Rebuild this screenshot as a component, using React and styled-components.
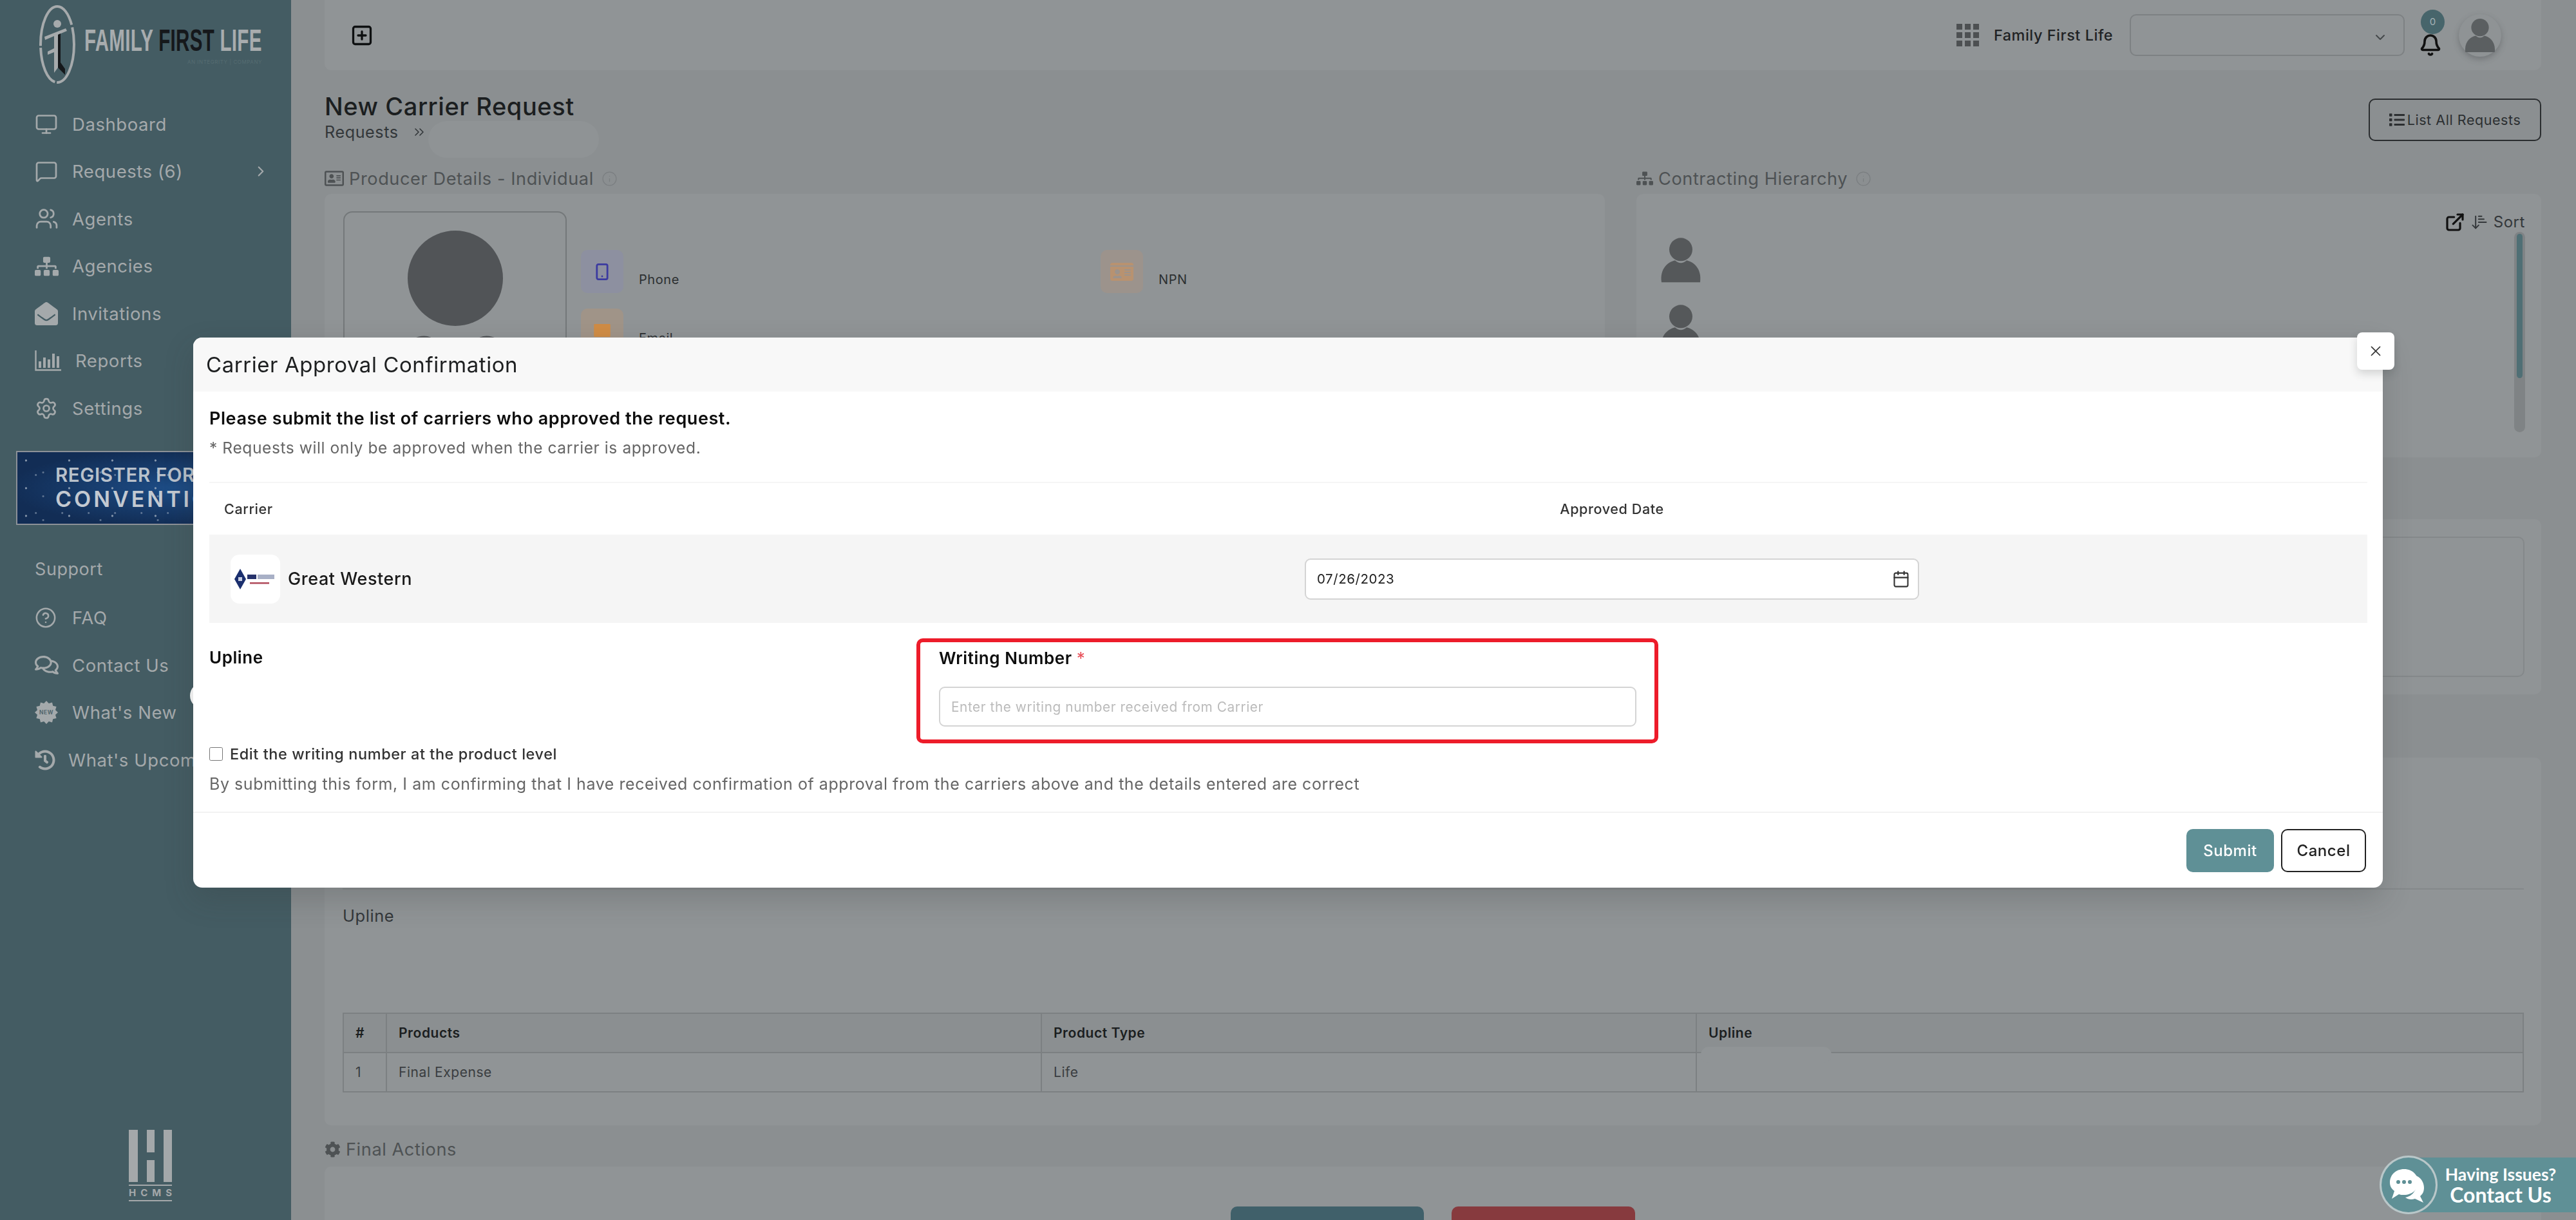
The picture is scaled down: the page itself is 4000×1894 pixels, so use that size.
import React from 'react';
import styled, { createGlobalStyle } from 'styled-components';
import { Monitor, MessageSquare, Users, Settings, CircleHelp, ChevronRight, ChevronDown, ChevronsRight, SquarePlus, Bell, Info, ExternalLink, ArrowDownNarrowWide, Calendar, X, Smartphone, Mail } from 'lucide-react';
import { FaSitemap, FaEnvelopeOpen, FaRegComments, FaHistory, FaList, FaRegAddressCard, FaCog, FaIdCard } from 'react-icons/fa';

const Global = createGlobalStyle`
  html, body { margin: 0; padding: 0; width: 4000px; height: 1894px; overflow: hidden; background: #8b8f91; }
  body { font-family: Inter, "Open Sans", "Liberation Sans", sans-serif; letter-spacing: 0.035em; }
  * { box-sizing: border-box; }
  input { font-family: inherit; letter-spacing: inherit; }
`;

const Page = styled.div`display: flex; width: 4000px; height: 1894px; overflow: hidden;`;

/* ---------- sidebar ---------- */
const Sidebar = styled.aside`
  width: 452px; flex: none; height: 100%; background: #445c63; display: flex; flex-direction: column; color: #a4a9ab;
`;
const Brand = styled.div`height: 156px; padding: 7px 0 0 60px; display: flex; align-items: flex-start;`;
const BrandWords = styled.div`margin: 37px 0 0 13px; display: flex; flex-direction: column; width: 276px;`;
const BrandName = styled.div`
  font-family: "Liberation Sans", sans-serif; font-weight: 700; font-size: 48px; line-height: 38px; letter-spacing: 0.01em; white-space: nowrap;
  color: #a8acae; transform: scaleX(0.615); transform-origin: left center;
`;
const BrandDark = styled.span`color: #15181b;`;
const BrandSub = styled.div`font-size: 8px; line-height: 10px; color: #566c72; text-align: right; margin-top: 9px; white-space: nowrap;`;
const Nav = styled.nav`display: flex; flex-direction: column; padding-left: 54px;`;
const NavItem = styled.div`
  height: 73.5px; display: flex; align-items: center; font-size: 27.5px; white-space: nowrap; position: relative;
`;
const NavIcon = styled.span`width: ${p => p.$w || 58}px; flex: none; display: flex; align-items: center;`;
const NavChevron = styled.span`position: absolute; left: 338px; display: flex;`;
const Banner = styled.div`
  width: 400px; height: 115px; margin: 29px 0 0 25px; border: 2px solid #8c9198; flex: none; padding: 18px 0 0 59px; overflow: hidden;
  background-color: #173a68;
  background-image:
    radial-gradient(circle at 20% 30%, rgba(169,181,196,.75) 0 1.2px, transparent 2px),
    radial-gradient(circle at 70% 60%, rgba(147,163,184,.6) 0 1px, transparent 2px),
    radial-gradient(circle at 45% 85%, rgba(169,181,196,.5) 0 1px, transparent 2px),
    radial-gradient(ellipse at 60% 50%, #1d4c85 0, #122d55 75%);
  background-size: 67px 43px, 41px 59px, 89px 37px, 100% 100%;
`;
const BannerTop = styled.div`font-size: 29.5px; line-height: 35px; font-weight: 600; color: #b9c1cb; white-space: nowrap; letter-spacing: 0.02em;`;
const BannerBig = styled.div`font-size: 34px; line-height: 40px; font-weight: 600; color: #c3c9d1; letter-spacing: 4px; white-space: nowrap;`;
const SupportLabel = styled.div`height: 60px; margin: 39px 0 9px 54px; font-size: 27px; display: flex; align-items: center; flex: none;`;
const HcmsMark = styled.div`margin: auto 0 29px 200px; width: 67px; flex: none; display: flex; flex-direction: column;`;
const HcmsText = styled.div`
  border-top: 2px solid #a4a8aa; border-bottom: 2px solid #a4a8aa; margin-top: 4px; font-size: 15px; line-height: 22px; font-weight: 700; color: #a4a8aa;
  display: flex; justify-content: space-between; letter-spacing: 0;
`;

/* ---------- main ---------- */
const Main = styled.main`flex: 1; min-width: 0; padding: 0 54px 0 52px; color: #2b2e30;`;
const TopBar = styled.header`
  height: 109px; background: #909496; border-radius: 0 0 10px 10px; display: flex; align-items: center; padding: 0 62px 0 40px;
`;
const TopRight = styled.div`margin-left: auto; display: flex; align-items: center;`;
const OrgName = styled.span`font-size: 23.4px; margin-left: 23px; color: #1f2224; white-space: nowrap; font-weight: 500;`;
const OrgSelect = styled.div`
  width: 427px; height: 65px; border: 2px solid #7d8183; border-radius: 10px; margin-left: 26px; display: flex; align-items: center; justify-content: flex-end; padding: 6px 24px 0 0; color: #45494b;
`;
const BellWrap = styled.div`position: relative; width: 36px; height: 66px; margin-left: 22px; display: flex; align-items: flex-end; color: #111;`;
const BellBadge = styled.span`
  position: absolute; left: 3px; top: -7px; width: 37px; height: 38px; border-radius: 50%; background: #47656b; color: #a5b3b6; font-size: 15px;
  display: flex; align-items: center; justify-content: center; letter-spacing: 0;
`;
const Avatar = styled.div`
  width: 66px; height: 66px; border-radius: 50%; margin-left: 26px; background: #8f9395; box-shadow: 0 4px 10px rgba(60,64,66,.35); display: flex; align-items: center; justify-content: center;
`;
const PageHead = styled.div`display: flex; justify-content: space-between; align-items: flex-start; margin-top: 34px; height: 116px;`;
const PageTitle = styled.h1`margin: 0; font-size: 38px; line-height: 44px; font-weight: 500; color: #1b1e20;`;
const Crumbs = styled.div`position: relative; display: flex; align-items: center; gap: 20px; font-size: 25.2px; line-height: 36px; color: #33373a;`;
const Redaction = styled.span`
  position: absolute; left: ${p => p.$l}px; top: ${p => p.$t}px; width: ${p => p.$w}px; height: ${p => p.$h}px; border-radius: 30px; background: ${p => p.$c || '#93979a'};
`;
const OutlineBtn = styled.div`
  width: 268px; height: 66px; margin-top: 10px; border: 2.5px solid #2a2d2f; border-radius: 10px; display: flex; align-items: center; justify-content: center; gap: 4px; font-size: 21.5px; color: #2c2f31; white-space: nowrap;
`;
const TwoCols = styled.div`display: grid; grid-template-columns: 1988px 1405px; column-gap: 49px;`;
const SectionTitle = styled.div`display: flex; align-items: center; gap: 8px; height: 36px; font-size: 27.2px; color: #4e5254; white-space: nowrap;`;
const InfoMark = styled.span`display: flex; margin-left: 4px; color: #7a7e80;`;
const Panel = styled.section`
  background: #909496; border-radius: 10px; margin-top: ${p => p.$mt || 6}px; position: relative;
`;
const ProducerPanel = styled(Panel)`height: 408px; padding: 27px 29px; display: flex; overflow: hidden;`;
const PhotoBox = styled.div`
  width: 347px; height: 360px; border: 2px solid #74787a; border-radius: 14px; flex: none; display: flex; justify-content: center; padding-top: 28px; overflow: hidden;
`;
const Facts = styled.div`margin-left: 22px; padding-top: 60px; display: grid; grid-template-columns: 807px 1fr; grid-auto-rows: 91px;`;
const Fact = styled.div`display: flex; align-items: flex-start; font-size: 20px;`;
const FactTile = styled.span`
  width: 66px; height: 67px; border-radius: 10px; background: ${p => p.$bg}; color: ${p => p.$c}; display: flex; align-items: center; justify-content: center; flex: none;
`;
const FactLabel = styled.span`margin: 33px 0 0 24px; line-height: 26px; color: #2c2f31;`;
const HierarchyPanel = styled(Panel)`height: 409px; padding: 30px 25px 39px 36px; display: flex; justify-content: space-between; overflow: hidden;`;
const PeopleList = styled.div`display: flex; flex-direction: column; gap: 33px; padding-top: 37px;`;
const HierTools = styled.div`display: flex; flex-direction: column; align-items: flex-end; gap: 2px;`;
const ToolRow = styled.div`display: flex; align-items: center; gap: 8px; font-size: 24px; height: 27px; color: #33373a;`;
const ScrollTrack = styled.div`width: 17px; flex: 1; background: #7f8385; border-radius: 9px; padding: 3px 4px;`;
const ScrollThumb = styled.div`width: 9px; height: 224px; background: #4f6f75; border-radius: 5px;`;
const WidePanel = styled(Panel)`height: 272px; padding: 27px 26px; margin-top: 96px;`;
const InnerBox = styled.div`height: 100%; border: 2px solid #84888a; border-radius: 10px;`;
const DetailPanel = styled(Panel)`height: 571px; padding: 203px 27px 0 28px; margin-top: 98px;`;
const Rule = styled.hr`border: 0; border-top: 2px solid #85898b; margin: 0;`;
const PlainLabel = styled.div`font-size: 25.5px; line-height: 34px; margin-top: 24px; color: #33373a;`;
const Table = styled.table`
  width: 100%; margin-top: 133px; border-collapse: collapse; table-layout: fixed; font-size: 21px; position: relative;
`;
const Th = styled.th`
  height: 61px; border: 2px solid #7c8082; text-align: left; padding: 0 18px; font-weight: 600; color: #1b1e20; background: #8b8f91; width: ${p => p.$w ? p.$w + 'px' : 'auto'};
`;
const Td = styled.td`height: 61px; border: 2px solid #7c8082; padding: 0 18px; color: #3a3d40; position: relative;`;
const ActionsTitle = styled(SectionTitle)`margin-top: 19px;`;
const ActionsPanel = styled(Panel)`margin-top: 9px; height: 200px; padding-top: 62px; display: flex; justify-content: center; gap: 43px;`;
const ActionBtn = styled.div`width: ${p => p.$w}px; height: 80px; border-radius: 10px; background: ${p => p.$bg};`;

/* ---------- modal ---------- */
const ModalLayer = styled.div`position: fixed; inset: 0; display: flex; justify-content: center; align-items: flex-start; padding-top: 524px; z-index: 10;`;
const Modal = styled.div`
  position: relative; width: 3400px; height: 854px; background: #fff; border-radius: 14px; box-shadow: 0 18px 45px rgba(50,54,56,.22); color: #111; display: flex; flex-direction: column;
`;
const ModalHead = styled.div`height: 84px; flex: none; background: #f8f8f8; border-radius: 14px 14px 0 0; display: flex; align-items: center; padding-left: 20px; font-size: 33px; font-weight: 400; color: #1d1f20;`;
const CloseBtn = styled.button`
  position: absolute; top: -8px; right: -18px; width: 58px; height: 58px; border: 0; border-radius: 8px; background: #fff; box-shadow: 0 6px 14px rgba(40,44,46,.18); display: flex; align-items: center; justify-content: center; color: #333; padding: 0;
`;
const ModalBody = styled.div`flex: 1; padding: 26px 24px 0 25px;`;
const Lead = styled.div`font-size: 27px; line-height: 32px; font-weight: 600; color: #0d0d0d;`;
const Hint = styled.div`font-size: 24.6px; line-height: 32px; margin-top: 13px; color: #666; padding-bottom: 37px; border-bottom: 2px solid #f5f5f5;`;
const CarrierGrid = styled.div`
  display: grid; grid-template-columns: 1701px 954px 1fr; align-items: center; height: ${p => p.$h}px; background: ${p => p.$bg || 'transparent'};
`;
const HeadCell = styled.div`font-size: 21.6px; font-weight: 500; color: #333; padding-left: ${p => p.$pl || 0}px; text-align: ${p => p.$center ? 'center' : 'left'};`;
const CarrierCell = styled.div`display: flex; align-items: center; gap: 12px; padding-left: 33px; font-size: 27px; font-weight: 500; color: #1a1a1a;`;
const CarrierLogo = styled.div`width: 77px; height: 76px; background: #fff; border-radius: 14px; display: flex; align-items: center; justify-content: center; flex: none;`;
const DateField = styled.div`position: relative; height: 64px; display: flex;`;
const TextInput = styled.input`
  width: 100%; height: 100%; background: #fff; border: 2px solid #d4d4d4; border-radius: 9px; padding: 0 17px; font-size: ${p => p.$fs || 20}px; color: #222; outline: none;
  &::placeholder { color: #bbb; }
`;
const DateIcon = styled.span`position: absolute; right: 14px; top: 18px; display: flex; color: #333;`;
const FormRow = styled.div`display: grid; grid-template-columns: 1098px 1152px; margin-top: 24px;`;
const FieldLabel = styled.div`font-size: 26px; line-height: 32px; font-weight: 600; color: #0d0d0d; padding-top: ${p => p.$pt || 0}px;`;
const Required = styled.span`color: #e8505a; font-weight: 400;`;
const Highlight = styled.div`border: 6px solid #ed1c2a; border-radius: 10px; padding: 9px 28px 20px 29px; height: 163px; display: flex; flex-direction: column; gap: 28px;`;
const InputHold = styled.div`height: 62px;`;
const CheckRow = styled.label`display: flex; align-items: center; gap: 11px; height: 32px; font-size: 23.5px; color: #333; font-weight: 500;`;
const Check = styled.input`width: 21px; height: 21px; margin: 0; flex: none;`;
const Consent = styled.div`font-size: 25px; line-height: 32px; margin-top: 15px; color: #666; white-space: nowrap;`;
const ModalFoot = styled.div`height: 118px; flex: none; border-top: 2px solid #f2f2f2; display: flex; justify-content: flex-end; align-items: flex-start; gap: 11px; padding: 25px 26px 0 0;`;
const FootBtn = styled.button`
  width: ${p => p.$w}px; height: 67px; border-radius: 10px; font-family: inherit; letter-spacing: inherit; font-size: 24px; font-weight: 500; padding: 0;
  background: ${p => p.$solid ? '#5f9096' : '#fff'}; color: ${p => p.$solid ? '#fff' : '#222'}; border: ${p => p.$solid ? '0' : '2.5px solid #222'};
`;
const CollapseDot = styled.span`position: fixed; left: 295px; top: 1060px; width: 40px; height: 40px; border-radius: 50%; background: #fff; z-index: 9;`;
const HelpWidget = styled.div`
  position: fixed; right: 0; bottom: 12px; width: 265px; height: 85px; background: #5f9096; display: flex; flex-direction: column; justify-content: center; color: #fff; z-index: 11;
  font-family: Lato, "Liberation Sans", sans-serif; font-weight: 700; letter-spacing: 0; padding: 0 26px 0 57px; text-align: center;
`;
const HelpCircle = styled.div`
  position: absolute; left: -40px; top: -3px; width: 90px; height: 91px; border-radius: 50%; background: #5f9096; border: 3px solid #b9c7c9; display: flex; align-items: center; justify-content: center;
`;
const HelpSmall = styled.div`font-size: 26.5px; line-height: 30px; white-space: nowrap;`;
const HelpBig = styled.div`font-size: 32px; line-height: 34px; white-space: nowrap;`;

/* ---------- drawings ---------- */
const Emblem = () => (
  <svg width="58" height="124" viewBox="0 0 58 124" fill="none">
    <ellipse cx="29" cy="62" rx="26" ry="59" stroke="#a6aaac" strokeWidth="4" strokeDasharray="70 3 60 3 110 4" />
    <circle cx="29" cy="30" r="6" fill="#a6aaac" />
    <path d="M9 50 L42 37 L44 41 L30 47 L30 98 L24 106 L24 74 L14 78 L14 73 L24 68 L24 49 L10 55 Z" fill="#a6aaac" />
    <path d="M30 47 L34 45 L34 90 L41 100 L41 109 L30 98 Z" fill="#15181b" />
  </svg>
);
const ReportsIcon = () => (
  <svg width="41" height="32" viewBox="0 0 41 32" fill="none" stroke="#a4a9ab" strokeWidth="2.4">
    <path d="M1.5 0V30.5H41" />
    <path d="M8 27V17M15 27V11M22 27V14M29 27V5M36 27V9" strokeWidth="4" />
  </svg>
);
const NewBadge = () => {
  const pts = [];
  for (let i = 0; i < 24; i++) {
    const r = i % 2 ? 14.5 : 18; const a = (i * Math.PI) / 12;
    pts.push(`${18 + r * Math.cos(a)},${18 + r * Math.sin(a)}`);
  }
  return (
    <svg width="36" height="36" viewBox="0 0 36 36">
      <polygon points={pts.join(' ')} fill="#a4a9ab" />
      <text x="18" y="21" textAnchor="middle" fontSize="8.5" fontWeight="700" fill="#52676d" fontFamily="Inter, sans-serif">NEW</text>
    </svg>
  );
};
const Person = ({ w, c }) => (
  <svg width={w} height={w * 1.07} viewBox="0 0 66 70" fill={c}>
    <circle cx="33" cy="19" r="18" />
    <path d="M3 70 C0 48 14 38 24 36 Q33 44 42 36 C52 38 66 48 63 70 Z" />
  </svg>
);
const GridDots = () => (
  <svg width="35" height="35" viewBox="0 0 35 35" fill="#4d5052">
    {[0, 13, 26].flatMap(y => [0, 13, 26].map(x => <rect key={`${x}-${y}`} x={x} y={y} width="9" height="9" />))}
  </svg>
);
const PhotoFigure = () => (
  <svg width="300" height="330" viewBox="0 0 300 330" fill="#515457">
    <circle cx="150" cy="74" r="74" />
    <path d="M60 185 Q100 150 120 172 L150 300 L180 172 Q200 150 240 185 L290 330 H10 Z" />
  </svg>
);
const GwLogo = () => (
  <svg width="66" height="36" viewBox="0 0 66 36">
    <polygon points="9,2 18,18 9,34 0,18" fill="#1b2f6e" />
    <rect x="6" y="15" width="6" height="6" fill="#c7cde0" />
    <rect x="20" y="11" width="14" height="7" fill="#27336b" />
    <rect x="36" y="11" width="26" height="7" fill="#a8b0c6" />
    <rect x="24" y="23" width="30" height="2.5" fill="#b04a5a" />
  </svg>
);
const ChatBubbles = () => (
  <svg width="58" height="58" viewBox="0 0 58 58" fill="#fff">
    <path d="M40 14 C53 18 58 38 47 46 L52 56 L39 50 C33 52 28 51 24 48 C38 46 46 30 40 14 Z" />
    <path d="M22 4 C36 4 44 14 44 25 C44 36 34 44 22 44 C19 44 16 44 14 43 L3 50 L7 38 C2 34 0 30 0 25 C0 13 9 4 22 4 Z" />
    <circle cx="13" cy="24" r="3" fill="#5f9096" /><circle cx="22" cy="24" r="3" fill="#5f9096" /><circle cx="31" cy="24" r="3" fill="#5f9096" />
  </svg>
);
const HBars = () => (
  <svg width="67" height="81" viewBox="0 0 67 81" fill="#a4a8aa">
    <rect x="0" y="0" width="14" height="81" /><rect x="28" y="0" width="12" height="35" /><rect x="28" y="47" width="12" height="34" /><rect x="54" y="0" width="13" height="81" />
  </svg>
);

const c = '#a4a9ab';
const navTop = [
  { label: 'Dashboard', icon: <Monitor size={36} color={c} strokeWidth={1.8} /> },
  { label: 'Requests (6)', icon: <MessageSquare size={36} color={c} strokeWidth={1.8} />, more: true },
  { label: 'Agents', icon: <Users size={37} color={c} strokeWidth={1.8} /> },
  { label: 'Agencies', icon: <FaSitemap size={37} color={c} /> },
  { label: 'Invitations', icon: <FaEnvelopeOpen size={36} color={c} /> },
  { label: 'Reports', icon: <ReportsIcon />, w: 63 },
  { label: 'Settings', icon: <Settings size={36} color={c} strokeWidth={1.8} /> },
];
const navBottom = [
  { label: 'FAQ', icon: <CircleHelp size={34} color={c} strokeWidth={1.8} /> },
  { label: 'Contact Us', icon: <FaRegComments size={37} color={c} /> },
  { label: "What's New", icon: <NewBadge /> },
  { label: "What's Upcoming", icon: <FaHistory size={32} color={c} />, w: 52 },
];

const NavList = ({ items }) => (
  <Nav>
    {items.map(it => (
      <NavItem key={it.label}>
        <NavIcon $w={it.w}>{it.icon}</NavIcon>
        {it.label}
        {it.more && <NavChevron><ChevronRight size={26} color={c} /></NavChevron>}
      </NavItem>
    ))}
  </Nav>
);

export default function App() {
  return (
    <Page>
      <Global />
      <Sidebar>
        <Brand>
          <Emblem />
          <BrandWords>
            <BrandName>FAMILY <BrandDark>FIRST</BrandDark> LIFE</BrandName>
            <BrandSub>AN INTEGRITY | COMPANY</BrandSub>
          </BrandWords>
        </Brand>
        <NavList items={navTop} />
        <Banner>
          <BannerTop>REGISTER FOR</BannerTop>
          <BannerBig>CONVENTION</BannerBig>
        </Banner>
        <SupportLabel>Support</SupportLabel>
        <NavList items={navBottom} />
        <HcmsMark>
          <HBars />
          <HcmsText><span>H</span><span>C</span><span>M</span><span>S</span></HcmsText>
        </HcmsMark>
      </Sidebar>

      <Main>
        <TopBar>
          <SquarePlus size={36} color="#0e1011" strokeWidth={2.2} />
          <TopRight>
            <GridDots />
            <OrgName>Family First Life</OrgName>
            <OrgSelect><ChevronDown size={24} /></OrgSelect>
            <BellWrap>
              <Bell size={36} strokeWidth={2.4} />
              <BellBadge>0</BellBadge>
            </BellWrap>
            <Avatar><Person w={50} c="#5b5f61" /></Avatar>
          </TopRight>
        </TopBar>

        <PageHead>
          <div>
            <PageTitle>New Carrier Request</PageTitle>
            <Crumbs>
              Requests <ChevronsRight size={24} strokeWidth={1.6} />
              <Redaction $l={161} $t={1} $w={265} $h={57} $c="#8f9395" />
            </Crumbs>
          </div>
          <OutlineBtn><FaList size={24} />List All Requests</OutlineBtn>
        </PageHead>

        <TwoCols>
          <div>
            <SectionTitle><FaRegAddressCard size={30} />Producer Details - Individual<InfoMark><Info size={25} strokeWidth={1.2} /></InfoMark></SectionTitle>
            <ProducerPanel>
              <PhotoBox><PhotoFigure /></PhotoBox>
              <Facts>
                <Fact>
                  <FactTile $bg="#8d90a0" $c="#3b3aa0"><Smartphone size={28} strokeWidth={2.4} /></FactTile>
                  <FactLabel>Phone</FactLabel>
                </Fact>
                <Fact>
                  <FactTile $bg="#9c938c" $c="#b89270"><FaIdCard size={36} /></FactTile>
                  <FactLabel>NPN</FactLabel>
                </Fact>
                <Fact>
                  <FactTile $bg="#a09488" $c="#d08c45"><Mail size={34} fill="#d08c45" stroke="#a09488" /></FactTile>
                  <FactLabel>Email</FactLabel>
                </Fact>
              </Facts>
            </ProducerPanel>
          </div>
          <div>
            <SectionTitle><FaSitemap size={26} />Contracting Hierarchy<InfoMark><Info size={25} strokeWidth={1.2} /></InfoMark></SectionTitle>
            <HierarchyPanel>
              <PeopleList>
                <Person w={66} c="#55585a" />
                <Person w={66} c="#55585a" />
              </PeopleList>
              <HierTools>
                <ToolRow>
                  <ExternalLink size={32} color="#111" strokeWidth={2.4} />
                  <ArrowDownNarrowWide size={28} strokeWidth={1.7} />
                  Sort
                </ToolRow>
                <ScrollTrack><ScrollThumb /></ScrollTrack>
              </HierTools>
            </HierarchyPanel>
          </div>
        </TwoCols>

        <WidePanel><InnerBox /></WidePanel>

        <DetailPanel>
          <Rule />
          <PlainLabel>Upline</PlainLabel>
          <Table>
            <thead>
              <tr>
                <Th $w={67}>#</Th>
                <Th $w={1017}>Products</Th>
                <Th $w={1017}>Product Type</Th>
                <Th>Upline</Th>
              </tr>
            </thead>
            <tbody>
              <tr>
                <Td>1</Td>
                <Td>Final Expense</Td>
                <Td>Life</Td>
                <Td><Redaction $l={6} $t={-10} $w={203} $h={25} $c="#909496" /></Td>
              </tr>
            </tbody>
          </Table>
        </DetailPanel>

        <ActionsTitle><FaCog size={25} />Final Actions</ActionsTitle>
        <ActionsPanel>
          <ActionBtn $w={300} $bg="#40606a" />
          <ActionBtn $w={285} $bg="#873a3e" />
        </ActionsPanel>
      </Main>

      <CollapseDot />
      <ModalLayer>
        <Modal>
          <CloseBtn aria-label="Close"><X size={26} strokeWidth={1.6} /></CloseBtn>
          <ModalHead>Carrier Approval Confirmation</ModalHead>
          <ModalBody>
            <Lead>Please submit the list of carriers who approved the request.</Lead>
            <Hint>* Requests will only be approved when the carrier is approved.</Hint>
            <CarrierGrid $h={80}>
              <HeadCell $pl={23}>Carrier</HeadCell>
              <HeadCell $center>Approved Date</HeadCell>
            </CarrierGrid>
            <CarrierGrid $h={137} $bg="#f5f5f5">
              <CarrierCell>
                <CarrierLogo><GwLogo /></CarrierLogo>
                Great Western
              </CarrierCell>
              <DateField>
                <TextInput $fs={20.5} readOnly value="07/26/2023" />
                <DateIcon><Calendar size={28} strokeWidth={1.8} /></DateIcon>
              </DateField>
            </CarrierGrid>
            <FormRow>
              <FieldLabel $pt={14}>Upline</FieldLabel>
              <Highlight>
                <FieldLabel>Writing Number <Required>*</Required></FieldLabel>
                <InputHold><TextInput $fs={20.8} placeholder="Enter the writing number received from Carrier" /></InputHold>
              </Highlight>
            </FormRow>
            <CheckRow><Check type="checkbox" />Edit the writing number at the product level</CheckRow>
            <Consent>By submitting this form, I am confirming that I have received confirmation of approval from the carriers above and the details entered are correct</Consent>
          </ModalBody>
          <ModalFoot>
            <FootBtn $solid $w={136}>Submit</FootBtn>
            <FootBtn $w={132}>Cancel</FootBtn>
          </ModalFoot>
        </Modal>
      </ModalLayer>
      <HelpWidget>
        <HelpCircle><ChatBubbles /></HelpCircle>
        <HelpSmall>Having Issues?</HelpSmall>
        <HelpBig>Contact Us</HelpBig>
      </HelpWidget>
    </Page>
  );
}
